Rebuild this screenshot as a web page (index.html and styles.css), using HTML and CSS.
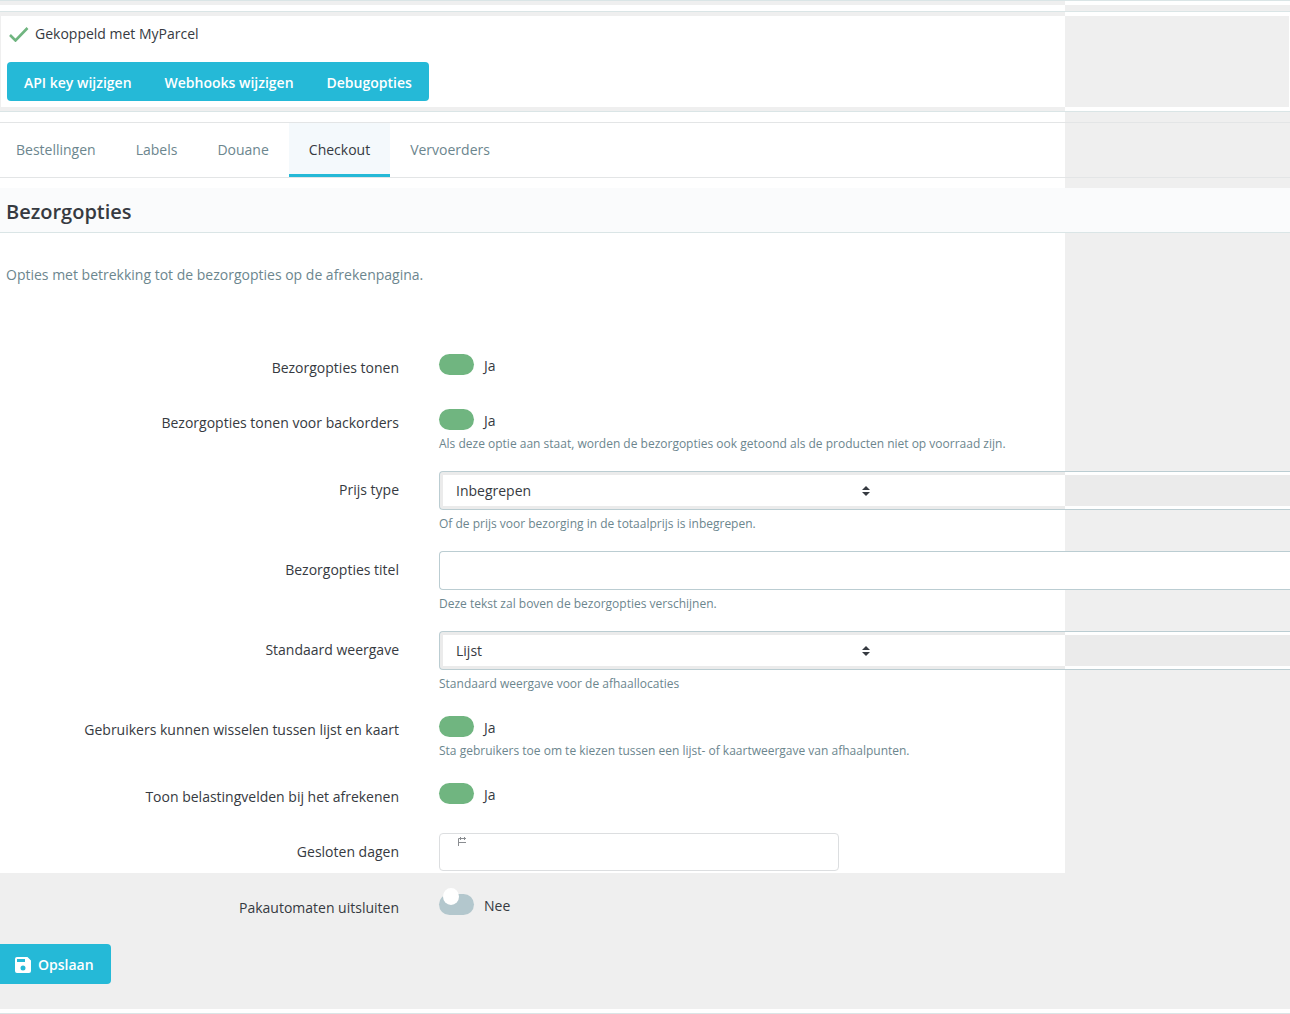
FILE: index.html
```html
<!DOCTYPE html>
<html lang="nl">
<head>
  <meta charset="UTF-8" />
  <meta name="viewport" content="width=device-width, initial-scale=1" />
  <title>MyParcel - Checkout</title>
  <link rel="stylesheet" href="styles.css">
</head>
<body>
  <div class="page">
    <div class="top-strip"></div>

    <section class="card">
      <div class="card-body">
        <p class="status">
          <svg class="check" viewBox="0 0 20 16" width="20" height="16" aria-hidden="true">
            <path d="M1 9l5.500 5.500L18.500 2" fill="none" stroke="#70b580" stroke-width="2.600" />
          </svg>
          Gekoppeld met MyParcel
        </p>
        <div class="btn-group">
          <button type="button" class="btn">API key wijzigen</button>
          <button type="button" class="btn">Webhooks wijzigen</button>
          <button type="button" class="btn">Debugopties</button>
        </div>
      </div>
    </section>

    <nav class="tabs">
      <a href="#bestellingen">Bestellingen</a>
      <a href="#labels">Labels</a>
      <a href="#douane">Douane</a>
      <a href="#checkout" class="active">Checkout</a>
      <a href="#vervoerders">Vervoerders</a>
    </nav>

    <h2 class="title">Bezorgopties</h2>
    <p class="intro">Opties met betrekking tot de bezorgopties op de afrekenpagina.</p>

    <form class="form">
      <div class="row">
        <label class="row-label" for="tonen">Bezorgopties tonen</label>
        <div class="field">
          <div class="toggle">
            <input type="checkbox" id="tonen" checked>
            <span>Ja</span>
          </div>
        </div>
      </div>

      <div class="row">
        <label class="row-label" for="backorders">Bezorgopties tonen voor backorders</label>
        <div class="field">
          <div class="toggle">
            <input type="checkbox" id="backorders" checked>
            <span>Ja</span>
          </div>
          <p class="help">Als deze optie aan staat, worden de bezorgopties ook getoond als de producten niet op voorraad zijn.</p>
        </div>
      </div>

      <div class="row">
        <label class="row-label" for="prijs">Prijs type</label>
        <div class="field">
          <select class="select" id="prijs">
            <option>Inbegrepen</option>
          </select>
          <p class="help">Of de prijs voor bezorging in de totaalprijs is inbegrepen.</p>
        </div>
      </div>

      <div class="row">
        <label class="row-label" for="titel">Bezorgopties titel</label>
        <div class="field">
          <input type="text" class="text" id="titel">
          <p class="help">Deze tekst zal boven de bezorgopties verschijnen.</p>
        </div>
      </div>

      <div class="row">
        <label class="row-label" for="weergave">Standaard weergave</label>
        <div class="field">
          <select class="select" id="weergave">
            <option>Lijst</option>
          </select>
          <p class="help">Standaard weergave voor de afhaallocaties</p>
        </div>
      </div>

      <div class="row">
        <label class="row-label" for="wisselen">Gebruikers kunnen wisselen tussen lijst en kaart</label>
        <div class="field">
          <div class="toggle">
            <input type="checkbox" id="wisselen" checked>
            <span>Ja</span>
          </div>
          <p class="help">Sta gebruikers toe om te kiezen tussen een lijst- of kaartweergave van afhaalpunten.</p>
        </div>
      </div>

      <div class="row">
        <label class="row-label" for="belasting">Toon belastingvelden bij het afrekenen</label>
        <div class="field">
          <div class="toggle">
            <input type="checkbox" id="belasting" checked>
            <span>Ja</span>
          </div>
        </div>
      </div>

      <div class="row">
        <label class="row-label" for="gesloten">Gesloten dagen</label>
        <div class="field date-field">
          <input type="text" class="date" id="gesloten">
          <svg class="calendar" viewBox="0 0 10 10" width="10" height="10" aria-hidden="true">
            <path d="M1.500 10V2.500H9M3.500 1v3M7.500 1v3M1.500 6.500H9" fill="none" stroke="#8a8d91" />
          </svg>
        </div>
      </div>

      <div class="row">
        <label class="row-label" for="pakautomaten">Pakautomaten uitsluiten</label>
        <div class="field">
          <div class="toggle">
            <input type="checkbox" id="pakautomaten">
            <span>Nee</span>
          </div>
        </div>
      </div>

      <button type="submit" class="btn save">
        <svg viewBox="0 0 16 16" width="16" height="16" aria-hidden="true">
          <path fill="#fff" fill-rule="evenodd" d="M2 0h10.500L16 3.500V14a2 2 0 0 1-2 2H2a2 2 0 0 1-2-2V2a2 2 0 0 1 2-2zM2 2v3h8V2zM8 8.500a2.500 2.500 0 1 0 0 5 2.500 2.500 0 0 0 0-5z" />
        </svg>
        Opslaan
      </button>
    </form>

    <div class="bottom-strip"></div>
  </div>
</body>
</html>
```
FILE: styles.css
```css
:root {
  --side: 225px;
  --grey: #efefef;
  --line: #dae5e6;
  --primary: #25b9d7;
  --text: #363a41;
  --muted: #6c868e;
}

* {
  box-sizing: border-box;
}

body {
  margin: 0;
  font-family: 'Open Sans', sans-serif;
  font-size: 14px;
  line-height: 20px;
  color: var(--text);
  background-color: var(--grey);
}

p, h2 {
  margin: 0;
}

/* white sheet that leaves a grey band on the right and at the bottom */
.page {
  overflow: hidden;
  background: linear-gradient(#fff, #fff) no-repeat;
  background-size: calc(100% - var(--side)) calc(100% - 141px);
}

.top-strip {
  height: 5px;
  margin-bottom: 6px;
  border-top: 1px solid var(--line);
  background: linear-gradient(to right, var(--grey) calc(100% - var(--side)), #fff 0);
}

.card {
  padding: 4px 1px;
  border-top: 1px solid var(--line);
  border-bottom: 1px solid var(--line);
  background: linear-gradient(to right, var(--grey) calc(100% - var(--side)), #fff 0);
}

.card-body {
  padding: 8px 6px 6px;
  background: linear-gradient(to right, #fff calc(100% - var(--side) + 1px), var(--grey) 0);
}

.status {
  display: flex;
  align-items: center;
  gap: 6px;
  margin: 0 0 18px 2px;
}

.btn-group {
  display: flex;
}

.btn {
  height: 39px;
  padding: 2px 17px 0;
  border: 0;
  border-radius: 4px;
  background-color: var(--primary);
  color: #fff;
  font: 600 14px/20px 'Open Sans', sans-serif;
  cursor: pointer;
}

.btn-group .btn:not(:last-child) {
  padding-right: 16px;
  border-top-right-radius: 0;
  border-bottom-right-radius: 0;
}

.btn-group .btn:not(:first-child) {
  border-top-left-radius: 0;
  border-bottom-left-radius: 0;
}

.tabs {
  display: flex;
  height: 56px;
  margin: 10px 0;
  border-top: 1px solid #e3e5e6;
  border-bottom: 1px solid #e3e5e6;
}

.tabs a {
  padding: 17px 20px 14px;
  border-bottom: 3px solid transparent;
  color: var(--muted);
  text-decoration: none;
}

.tabs a:first-child {
  padding-left: 16px;
}

.tabs .active {
  border-bottom-color: var(--primary);
  background-color: #f4f9fc;
  color: var(--text);
}

.title {
  padding: 12px 6px 8px;
  border-bottom: 1px solid var(--line);
  background-color: #fafbfc;
  font-size: 20px;
  font-weight: 600;
  line-height: 24px;
}

.intro {
  padding: 32px 6px 64px;
  color: var(--muted);
}

.row {
  display: grid;
  grid-template-columns: 399px 1fr;
  column-gap: 40px;
  margin-bottom: 18px;
}

.row-label {
  line-height: 37px;
  text-align: right;
}

.toggle {
  display: flex;
  gap: 10px;
  height: 26px;
  padding-top: 5px;
  line-height: 24px;
}

.toggle input {
  position: relative;
  appearance: none;
  width: 35px;
  height: 21px;
  margin: 0;
  border-radius: 11px;
  background-color: #b3c7cd;
}

.toggle input:checked {
  background-color: #70b580;
}

.toggle input:not(:checked)::before {
  content: '';
  position: absolute;
  top: -6px;
  left: 4px;
  width: 16px;
  height: 17px;
  border-radius: 50%;
  background-color: #fff;
}

.help {
  margin-top: 5px;
  font-size: 12px;
  line-height: 18px;
  color: var(--muted);
}

.select, .text {
  display: block;
  width: 100%;
  height: 39px;
  padding: 0 16px;
  border: 1px solid #bbcdd2;
  border-right: 0;
  border-radius: 4px 0 0 4px;
  background-color: #fff;
  color: var(--text);
  font: 14px/20px 'Open Sans', sans-serif;
}

/* arrow, inner sheet, then the 3px rim around it */
.select {
  appearance: none;
  background:
    url("data:image/svg+xml,%3Csvg xmlns='http://www.w3.org/2000/svg' width='8' height='10'%3E%3Cpath d='M0 4l4-4 4 4zM0 6h8l-4 4z' fill='%23363a41'/%3E%3C/svg%3E") 422px 50% no-repeat,
    linear-gradient(to right, #fff calc(100% - var(--side) - 3px), #ebebeb 0) 3px 3px / 100% calc(100% - 6px) no-repeat,
    linear-gradient(to right, #ebebeb calc(100% - var(--side)), #fff 0);
}

.date-field {
  position: relative;
}

.date {
  display: block;
  width: 400px;
  height: 38px;
  padding: 0 16px;
  border: 1px solid #dcdee0;
  border-radius: 4px;
  background-color: #fff;
}

.calendar {
  position: absolute;
  top: 3px;
  left: 18px;
}

.save {
  display: flex;
  align-items: center;
  gap: 7px;
  height: 40px;
  padding-left: 15px;
  border-radius: 0 4px 4px 0;
}

.bottom-strip {
  height: 5px;
  margin-top: 25px;
  border-bottom: 1px solid var(--line);
  background-color: #fff;
}
```
